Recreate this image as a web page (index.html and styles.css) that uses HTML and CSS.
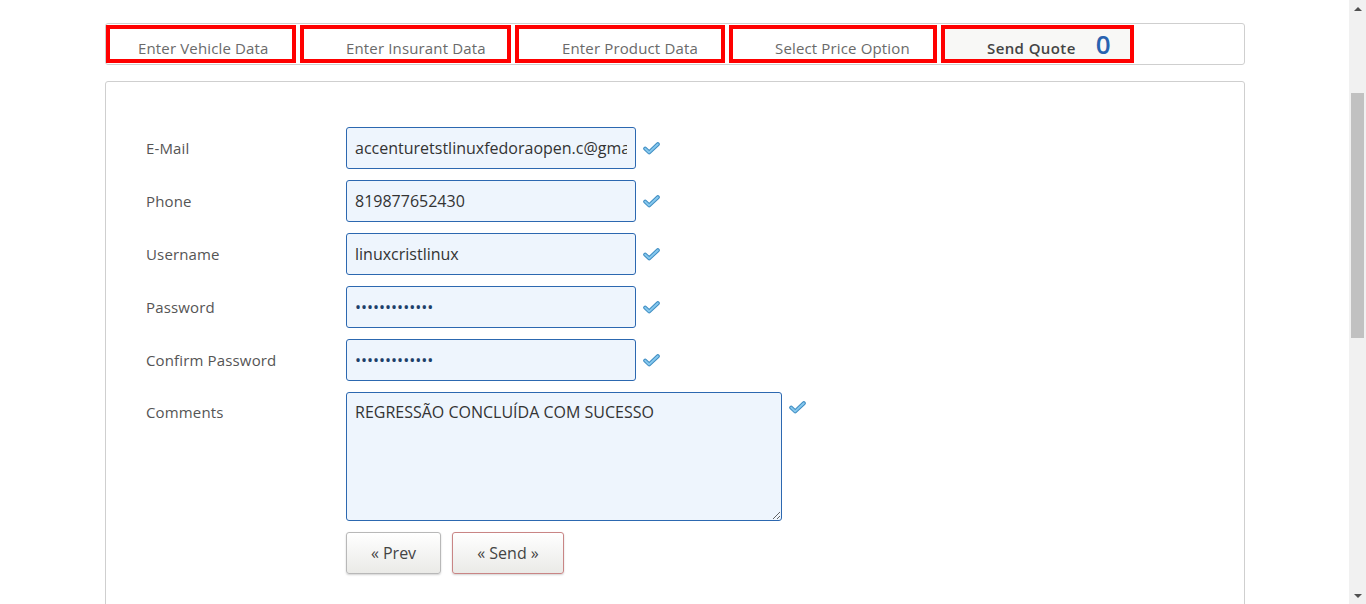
FILE: index.html
```html
<!DOCTYPE html>
<html>
<head>
<meta charset="utf-8">
<link rel="stylesheet" href="styles.css">
</head>
<body>
<div class="screen">
  <div class="page">
    <div class="container">
      <nav class="steps">
        <div class="step s1">Enter Vehicle Data</div>
        <div class="step s2">Enter Insurant Data</div>
        <div class="step s3">Enter Product Data</div>
        <div class="step s4">Select Price Option</div>
        <div class="step s5 active"><span class="sq">Send Quote</span><span class="count">0</span></div>
      </nav>
      <section class="panel">
        <div class="row">
          <label class="lbl">E-Mail</label>
          <input class="field" type="text" value="accenturetstlinuxfedoraopen.c@gmail.com">
          <span class="ok"><svg width="17" height="13" viewBox="0 0 17 13"><path d="M2.2 6.6 L6.2 10.4 L14.8 2.2" fill="none" stroke="#3f8dc2" stroke-width="4" stroke-linecap="round" stroke-linejoin="round"/><path d="M2.2 6.6 L6.2 10.4 L14.8 2.2" fill="none" stroke="#86c8ee" stroke-width="2" stroke-linecap="round" stroke-linejoin="round"/></svg></span>
        </div>
        <div class="row">
          <label class="lbl">Phone</label>
          <input class="field" type="text" value="819877652430">
          <span class="ok"><svg width="17" height="13" viewBox="0 0 17 13"><path d="M2.2 6.6 L6.2 10.4 L14.8 2.2" fill="none" stroke="#3f8dc2" stroke-width="4" stroke-linecap="round" stroke-linejoin="round"/><path d="M2.2 6.6 L6.2 10.4 L14.8 2.2" fill="none" stroke="#86c8ee" stroke-width="2" stroke-linecap="round" stroke-linejoin="round"/></svg></span>
        </div>
        <div class="row">
          <label class="lbl">Username</label>
          <input class="field" type="text" value="linuxcristlinux">
          <span class="ok"><svg width="17" height="13" viewBox="0 0 17 13"><path d="M2.2 6.6 L6.2 10.4 L14.8 2.2" fill="none" stroke="#3f8dc2" stroke-width="4" stroke-linecap="round" stroke-linejoin="round"/><path d="M2.2 6.6 L6.2 10.4 L14.8 2.2" fill="none" stroke="#86c8ee" stroke-width="2" stroke-linecap="round" stroke-linejoin="round"/></svg></span>
        </div>
        <div class="row">
          <label class="lbl">Password</label>
          <input class="field pw" type="password" value="abcdefghijklm">
          <span class="ok"><svg width="17" height="13" viewBox="0 0 17 13"><path d="M2.2 6.6 L6.2 10.4 L14.8 2.2" fill="none" stroke="#3f8dc2" stroke-width="4" stroke-linecap="round" stroke-linejoin="round"/><path d="M2.2 6.6 L6.2 10.4 L14.8 2.2" fill="none" stroke="#86c8ee" stroke-width="2" stroke-linecap="round" stroke-linejoin="round"/></svg></span>
        </div>
        <div class="row">
          <label class="lbl">Confirm Password</label>
          <input class="field pw" type="password" value="abcdefghijklm">
          <span class="ok"><svg width="17" height="13" viewBox="0 0 17 13"><path d="M2.2 6.6 L6.2 10.4 L14.8 2.2" fill="none" stroke="#3f8dc2" stroke-width="4" stroke-linecap="round" stroke-linejoin="round"/><path d="M2.2 6.6 L6.2 10.4 L14.8 2.2" fill="none" stroke="#86c8ee" stroke-width="2" stroke-linecap="round" stroke-linejoin="round"/></svg></span>
        </div>
        <div class="row row-area">
          <label class="lbl">Comments</label>
          <textarea class="area">REGRESSÃO CONCLUÍDA COM SUCESSO</textarea>
          <span class="ok ok-area"><svg width="17" height="13" viewBox="0 0 17 13"><path d="M2.2 6.6 L6.2 10.4 L14.8 2.2" fill="none" stroke="#3f8dc2" stroke-width="4" stroke-linecap="round" stroke-linejoin="round"/><path d="M2.2 6.6 L6.2 10.4 L14.8 2.2" fill="none" stroke="#86c8ee" stroke-width="2" stroke-linecap="round" stroke-linejoin="round"/></svg></span>
        </div>
        <div class="buttons">
          <button class="btn prev">« Prev</button>
          <button class="btn send">« Send »</button>
        </div>
      </section>
    </div>
  </div>
  <div class="scrollbar">
    <div class="arrow up"></div>
    <div class="track"><div class="thumb"></div></div>
    <div class="arrow down"></div>
  </div>
</div>
</body>
</html>
```
FILE: styles.css
```css
html, body {
  margin: 0;
  padding: 0;
  background: #fff;
}
body {
  font-family: "Open Sans", "Liberation Sans", sans-serif;
  overflow: hidden;
}
.screen {
  display: flex;
  height: 604px;
  overflow: hidden;
}
.page {
  flex: 1;
  padding-top: 23px;
}
.container {
  width: 1140px;
  margin-left: 105px;
}
.steps {
  box-sizing: border-box;
  height: 42px;
  border: 1px solid #cfcfcf;
  border-radius: 3px;
  padding: 1px 0 1px 0;
  display: flex;
  gap: 4px;
}
.step {
  box-sizing: border-box;
  height: 38px;
  border: 4px solid #ff0000;
  padding-top: 9px;
  padding-left: 42px;
  line-height: 20px;
  font-size: 15px;
  letter-spacing: 0.15px;
  color: #6a6a6a;
  white-space: nowrap;
}
.s1 { width: 190px; padding-left: 28px; }
.s2 { width: 211px; }
.s3 { width: 210px; padding-left: 43px; }
.s4 { width: 208px; }
.s5 { width: 193px; }
.active {
  background: #f8f8f6;
}
.sq {
  font-weight: 600;
  color: #444;
  letter-spacing: 0.4px;
}
.count {
  margin-left: 20px;
  font-size: 26px;
  font-weight: 600;
  line-height: 0;
  letter-spacing: 0;
  color: #2863b0;
}
.panel {
  margin-top: 16px;
  height: 600px;
  border: 1px solid #cfcfcf;
  border-radius: 3px;
  padding: 45px 40px 0 40px;
  display: flex;
  flex-direction: column;
  gap: 11px;
}
.row {
  display: flex;
  align-items: center;
  height: 42px;
}
.row-area {
  height: auto;
  align-items: flex-start;
}
.lbl {
  width: 200px;
  font-size: 15px;
  letter-spacing: 0.15px;
  line-height: 42px;
  color: #555;
}
.row-area .lbl {
  line-height: 40px;
}
.field {
  box-sizing: border-box;
  width: 290px;
  height: 42px;
  margin: 0;
  border: 1px solid #2c68b0;
  border-radius: 3px;
  background: #eef5fd;
  padding: 0 8px;
  font-family: "Open Sans", "Liberation Sans", sans-serif;
  font-size: 16px;
  color: #333;
  outline: none;
}
.pw {
  font-size: 16px;
  color: #1d3f6a;
}
.area {
  box-sizing: border-box;
  width: 436px;
  height: 129px;
  margin: 0;
  border: 1px solid #2c68b0;
  border-radius: 3px;
  background: #eef5fd;
  padding: 8px 8px;
  font-family: "Open Sans", "Liberation Sans", sans-serif;
  font-size: 16px;
  line-height: 22px;
  color: #333;
  outline: none;
  resize: vertical;
}
.ok {
  display: flex;
  margin-left: 7px;
}
.ok-area {
  margin-top: 9px;
}
.buttons {
  display: flex;
  gap: 11px;
  padding-left: 200px;
}
.btn {
  box-sizing: border-box;
  height: 42px;
  margin: 0;
  border: 1px solid #b8b8b8;
  border-radius: 3px;
  background: linear-gradient(#ffffff, #eaeae7);
  box-shadow: 0 1px 2px rgba(0, 0, 0, 0.18);
  font-family: "Open Sans", "Liberation Sans", sans-serif;
  font-size: 16px;
  color: #444;
  padding: 0;
}
.prev { width: 95px; }
.send { width: 112px; border-color: #c98585; }
.scrollbar {
  width: 17px;
  height: 604px;
  background: #f1f1f1;
  display: flex;
  flex-direction: column;
}
.arrow {
  height: 17px;
  display: flex;
  align-items: center;
  justify-content: center;
}
.arrow.up::before {
  content: "";
  border-left: 4px solid transparent;
  border-right: 4px solid transparent;
  border-bottom: 4px solid #505050;
}
.arrow.down::before {
  content: "";
  border-left: 4px solid transparent;
  border-right: 4px solid transparent;
  border-top: 4px solid #505050;
}
.track {
  flex: 1;
  padding: 76px 2px 0 2px;
}
.thumb {
  height: 245px;
  background: #c1c1c1;
}
```
